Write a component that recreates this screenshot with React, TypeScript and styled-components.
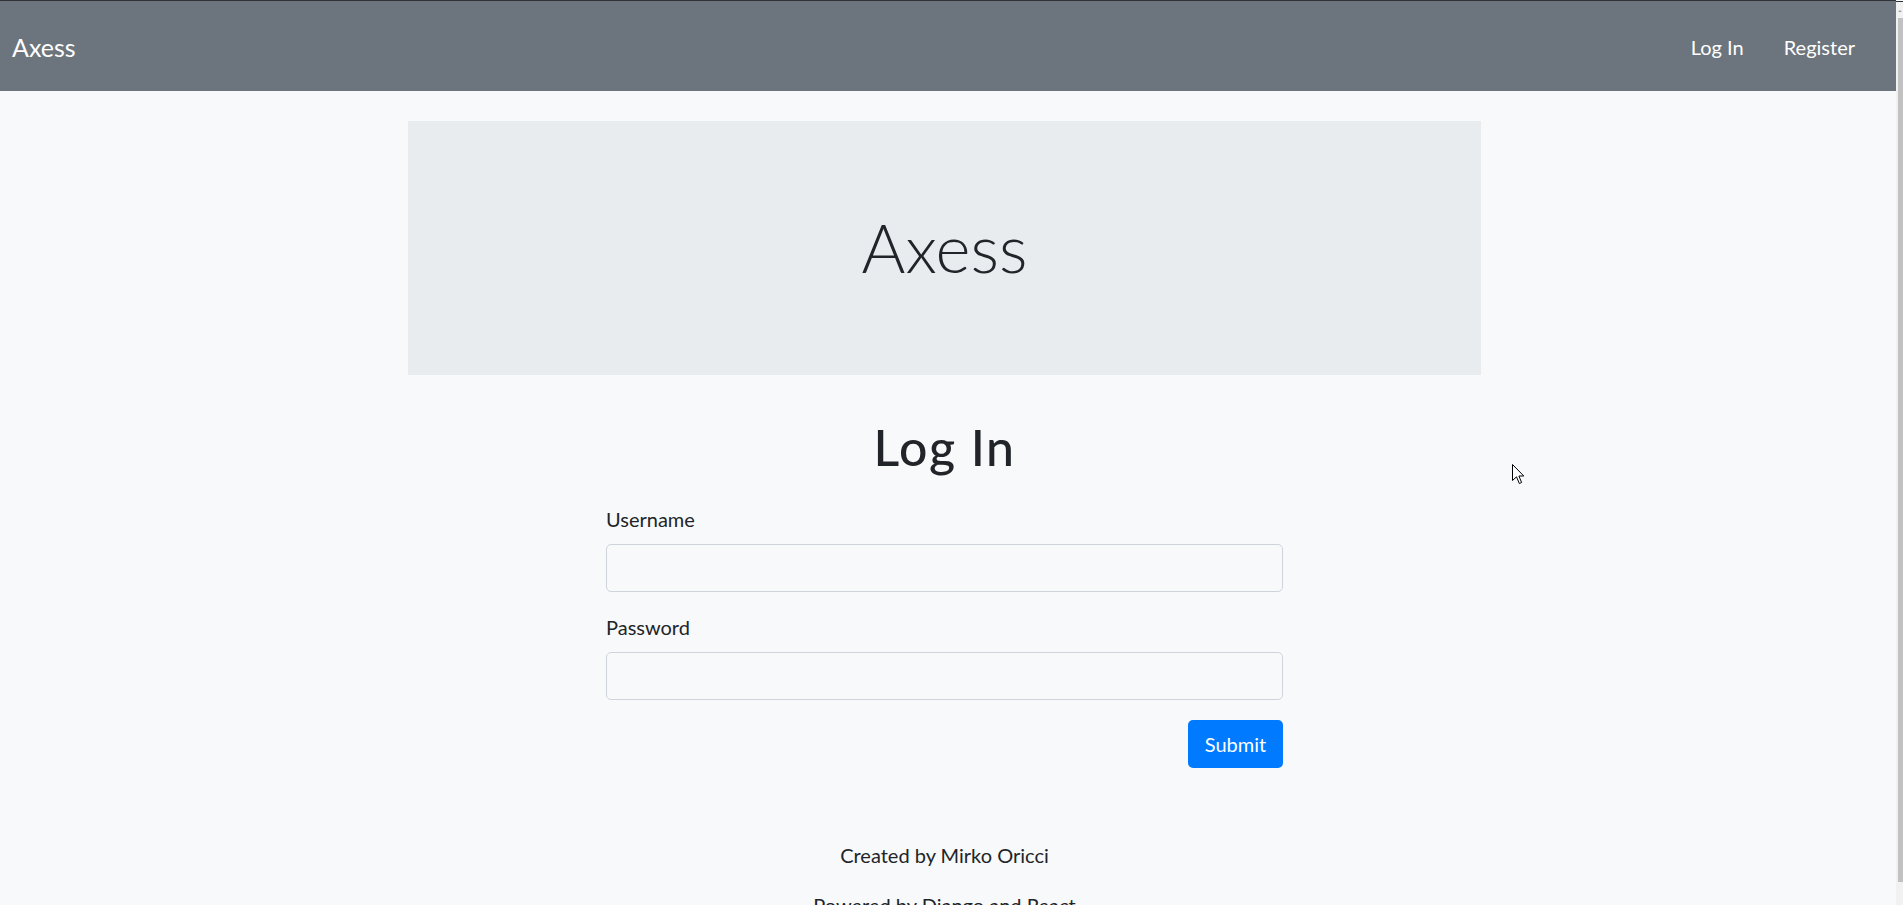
import styled, { createGlobalStyle } from "styled-components";

const GlobalStyle = createGlobalStyle`
  body {
    margin: 0 7px 0 0;
    background: #f8f9fa;
    color: #212529;
    font-family: Lato, "Open Sans", sans-serif;
    font-size: 20px;
    line-height: 1.5;
  }

  * {
    box-sizing: border-box;
  }
`;

const NavBar = styled.nav`
  height: 91px;
  border-top: 1px solid #2f3133;
  background: #6c757d;
  display: flex;
  align-items: center;
  justify-content: space-between;
  padding: 2px 21px 0 12px;
`;

const Brand = styled.a`
  color: #fff;
  font-size: 25px;
  line-height: 37px;
  text-decoration: none;
`;

const NavLinks = styled.div`
  display: flex;
  align-items: center;
`;

const NavLink = styled.a`
  color: #fff;
  font-size: 20px;
  line-height: 30px;
  padding: 0 20px;
  text-decoration: none;
`;

const Main = styled.main`
  width: 1073px;
  margin-left: calc(50% - 540px);
`;

const Jumbotron = styled.section`
  margin-top: 30px;
  padding: 84px 40px 76px;
  background: #e9ecef;
  text-align: center;
`;

const DisplayTitle = styled.h1`
  margin: 0 0 10px;
  font-size: 67px;
  font-weight: 300;
  line-height: 84px;
`;

const PageTitle = styled.h1`
  margin: 42px 0 8px;
  font-size: 50px;
  font-weight: 500;
  letter-spacing: 1.5px;
  line-height: 60px;
  text-align: center;
`;

const Form = styled.form`
  width: 677px;
  margin: 27px auto 0;
`;

const FormGroup = styled.div`
  margin-bottom: 20px;
`;

const Label = styled.label`
  display: block;
  margin-bottom: 10px;
  line-height: 30px;
`;

const Input = styled.input`
  display: block;
  width: 100%;
  height: 48px;
  padding: 0 15px;
  font: inherit;
  color: #495057;
  background: #f8f9fa;
  border: 1px solid #ced4da;
  border-radius: 5px;
`;

const Actions = styled.div`
  display: flex;
  justify-content: flex-end;
`;

const SubmitButton = styled.button`
  width: 95px;
  height: 48px;
  font: inherit;
  color: #fff;
  background: #007bff;
  border: none;
  border-radius: 5px;
`;

const Footer = styled.footer`
  margin-top: 72px;
  text-align: center;

  p {
    margin: 0 0 20px;
    line-height: 30px;
  }
`;

const ScrollTrack = styled.div`
  position: fixed;
  top: 1px;
  right: 0;
  width: 7px;
  height: 100vh;
  background: #f1f1f1;
  border-top: 1px solid #2f3133;
`;

const ScrollArrow = styled.div`
  margin: 8px 0 0 2px;
  width: 0;
  height: 0;
  border-left: 2px solid transparent;
  border-right: 2px solid transparent;
  border-bottom: 2px solid #a3a3a3;
`;

const ScrollThumb = styled.div`
  margin: 6px 0 0 2px;
  width: 5px;
  height: calc(100% - 40px);
  background: #c1c1c1;
`;

const Cursor = styled.svg`
  position: absolute;
  left: 1512px;
  top: 464px;
`;

export default function App() {
  return (
    <>
      <GlobalStyle />
      <NavBar>
        <Brand href="#">Axess</Brand>
        <NavLinks>
          <NavLink href="#">Log In</NavLink>
          <NavLink href="#">Register</NavLink>
        </NavLinks>
      </NavBar>
      <Main>
        <Jumbotron>
          <DisplayTitle>Axess</DisplayTitle>
        </Jumbotron>
        <PageTitle>Log In</PageTitle>
        <Form onSubmit={(e) => e.preventDefault()}>
          <FormGroup>
            <Label htmlFor="username">Username</Label>
            <Input id="username" type="text" />
          </FormGroup>
          <FormGroup>
            <Label htmlFor="password">Password</Label>
            <Input id="password" type="password" />
          </FormGroup>
          <Actions>
            <SubmitButton type="submit">Submit</SubmitButton>
          </Actions>
        </Form>
        <Footer>
          <p>Created by Mirko Oricci</p>
          <p>Powered by Django and React</p>
        </Footer>
      </Main>
      <ScrollTrack>
        <ScrollArrow />
        <ScrollThumb />
      </ScrollTrack>
      <Cursor width="13" height="21" viewBox="0 0 13 21">
        <path
          d="M0.5 0.5 L0.5 16.5 L4.5 12.8 L7.3 19.5 L9.6 18.5 L6.9 12 L11.8 12 Z"
          fill="#fff"
          stroke="#000"
          strokeWidth="1"
          strokeLinejoin="round"
        />
      </Cursor>
    </>
  );
}
